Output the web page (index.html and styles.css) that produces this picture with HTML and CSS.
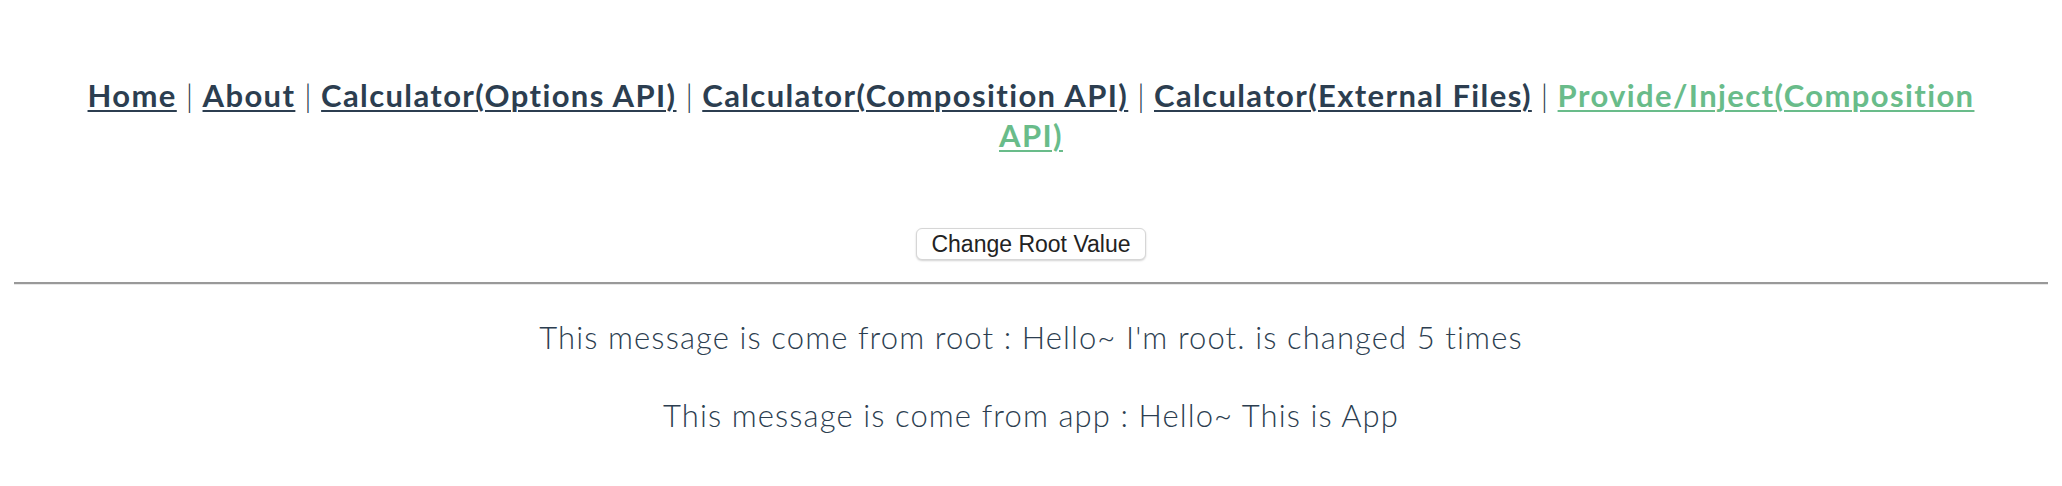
FILE: index.html
```html
<!DOCTYPE html>
<html lang="en">
<head>
<meta charset="utf-8">
<title>Provide/Inject</title>
<link rel="stylesheet" href="styles.css">
</head>
<body>
<div class="app">
  <nav class="nav">
    <a href="#" class="nav-link">Home</a><span class="sep"> | </span><a href="#" class="nav-link">About</a><span class="sep"> | </span><a href="#" class="nav-link">Calculator(Options API)</a><span class="sep"> | </span><a href="#" class="nav-link">Calculator(Composition API)</a><span class="sep"> | </span><a href="#" class="nav-link">Calculator(External Files)</a><span class="sep"> | </span><a href="#" class="nav-link nav-link-active">Provide/Inject(Composition API)</a>
  </nav>
  <main class="page">
    <button class="btn" type="button">Change Root Value</button>
    <hr class="divider">
    <p class="msg">This message is come from root : Hello~ I'm root. is changed 5 times</p>
    <p class="msg">This message is come from app : Hello~ This is App</p>
  </main>
</div>
</body>
</html>
```
FILE: styles.css
```css
html, body {
  margin: 0;
  padding: 0;
  background: #ffffff;
}

.app {
  font-family: Lato, "Open Sans", sans-serif;
  color: #2c3e50;
  text-align: center;
  padding: 0 14px;
}

.nav {
  padding: 75px 50px 0;
  font-size: 31px;
  line-height: 40px;
  font-weight: 400;
  letter-spacing: 1.38px;
}

.sep {
  font-weight: 300;
  letter-spacing: 0.5px;
}

.nav-link {
  font-weight: 700;
  color: #2c3e50;
  text-decoration: underline;
  text-decoration-thickness: 2px;
  text-underline-offset: 3px;
}

.nav-link-active {
  color: #69bc8a;
}

.page {
  padding-top: 73px;
  display: flex;
  flex-direction: column;
  align-items: center;
}

.btn {
  font-family: "Liberation Sans", Arial, sans-serif;
  font-size: 23px;
  color: #222;
  background: #fff;
  border: 1px solid #d6d6d6;
  border-radius: 6px;
  box-shadow: 0 1px 2px rgba(0, 0, 0, 0.18);
  height: 32px;
  padding: 0 14px;
  line-height: 30px;
}

.divider {
  align-self: stretch;
  margin: 22px 0 0;
  height: 0;
  border: 0;
  border-top: 2px solid #999999;
  border-bottom: 1px solid #e8e8e8;
}

.msg {
  font-size: 31px;
  font-weight: 300;
  line-height: 40px;
  letter-spacing: 1.1px;
  margin: 32px 0 0;
}

.msg + .msg {
  margin-top: 38px;
}
```
